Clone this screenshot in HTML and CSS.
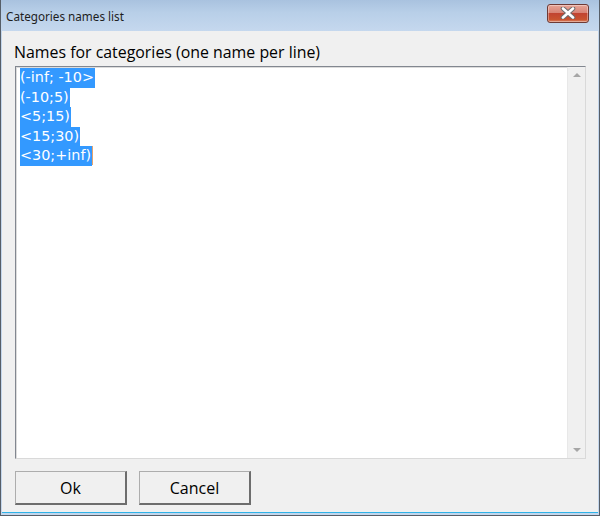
FILE: index.html
```html
<!DOCTYPE html>
<html>
<head>
<meta charset="utf-8">
<link rel="stylesheet" href="styles.css">
</head>
<body>
<div class="window">
  <div class="titlebar">
    <span class="title">Categories names list</span>
    <div class="close">
      <svg width="16" height="12" viewBox="0 0 16 12"><path d="M3 1.5 L13 10.5 M13 1.5 L3 10.5" stroke="#6d6d6d" stroke-width="4.6" stroke-linecap="round"/><path d="M3 1.5 L13 10.5 M13 1.5 L3 10.5" stroke="#ffffff" stroke-width="2.6" stroke-linecap="round"/></svg>
    </div>
  </div>
  <div class="client">
    <div class="label">Names for categories (one name per line)</div>
    <div class="memo">
      <div class="lines">
        <div class="line"><span class="sel">(-inf; -10&gt;</span></div>
        <div class="line"><span class="sel">(-10;5)</span></div>
        <div class="line"><span class="sel">&lt;5;15)</span></div>
        <div class="line"><span class="sel">&lt;15;30)</span></div>
        <div class="line"><span class="sel">&lt;30;+inf)</span><span class="caret"></span></div>
      </div>
      <div class="scrollbar">
        <div class="arrow up"></div>
        <div class="arrow down"></div>
      </div>
    </div>
    <div class="buttons">
      <div class="btn">Ok</div>
      <div class="btn">Cancel</div>
    </div>
  </div>
</div>
</body>
</html>
```
FILE: styles.css
```css
html, body { margin: 0; padding: 0; }
body { width: 600px; height: 516px; overflow: hidden; background: #fff; font-family: "Open Sans", "DejaVu Sans", sans-serif; }
.window {
  width: 600px; height: 516px; box-sizing: border-box;
  border-left: 1px solid #565e68; border-right: 1px solid #565e68; border-bottom: 1px solid #565e68;
  background: #c3d6ec;
  display: flex; flex-direction: column;
}
.titlebar {
  height: 31px; flex: none;
  background: linear-gradient(to bottom, #a9c2df 0%, #b8cfe8 40%, #c5d8ee 100%);
  display: flex; align-items: center; justify-content: space-between;
  padding: 0 10px 0 5px; box-sizing: border-box;
}
.title { font-family: "Noto Sans", sans-serif; font-size: 11.7px; color: #1e1e1e; margin-top: 1px; }
.close {
  width: 42px; height: 19px; margin-top: -5px; box-sizing: border-box;
  border: 1px solid #6e3a35; border-radius: 3px;
  background: linear-gradient(to bottom, #e7a597 0%, #d88476 45%, #c14431 50%, #c9532f 85%, #db8669 100%);
  display: flex; align-items: center; justify-content: center;
  box-shadow: inset 0 0 0 1px rgba(255,255,255,0.35);
}
.client {
  flex: 1; margin: 0 1px 2px 1px; background: #f0f0f0;
  display: flex; flex-direction: column;
  padding: 10px 12px 0 12px;
  border-bottom: 1px solid #2fb3e8;
}
.label { font-size: 15.9px; color: #000; height: 25px; line-height: 22px; padding-left: 0px; }
.memo {
  height: 393px; box-sizing: border-box;
  border: 1px solid #828790; border-right-color: #d9d9d9; border-bottom-color: #d9d9d9;
  background: #fff; display: flex;
  box-shadow: inset 1px 1px 0 #dcdcdc;
  margin-left: 1px; margin-right: 0;
}
.lines { flex: 1; padding: 1px 0 0 4px; font-family: "DejaVu Sans", sans-serif; font-size: 14.4px; }
.line { height: 19.5px; display: flex; align-items: stretch; }
.sel { background: #3399ff; color: #fff; display: block; line-height: 19.5px; height: 19.5px; padding-right: 1px; }
.caret { display: block; width: 1px; height: 19px; background: #e7a36c; }
.scrollbar {
  width: 17px; background: #f0f0f0; border-left: 1px solid #e8e8e8;
  display: flex; flex-direction: column; justify-content: space-between; align-items: center;
  padding: 6px 0;
}
.arrow { width: 0; height: 0; border-left: 4px solid transparent; border-right: 4px solid transparent; }
.arrow.up { border-bottom: 4px solid #a6a6a6; }
.arrow.down { border-top: 4px solid #a6a6a6; }
.buttons { display: flex; gap: 12px; padding-top: 12px; margin-left: 1px; }
.btn {
  width: 112px; height: 34px; box-sizing: border-box;
  border: 1px solid #adadad; border-right: 2px solid #6d6d6d; border-bottom: 2px solid #6d6d6d;
  background: #f0f0f0; display: flex; align-items: center; justify-content: center;
  font-size: 16px; color: #000;
}
```
